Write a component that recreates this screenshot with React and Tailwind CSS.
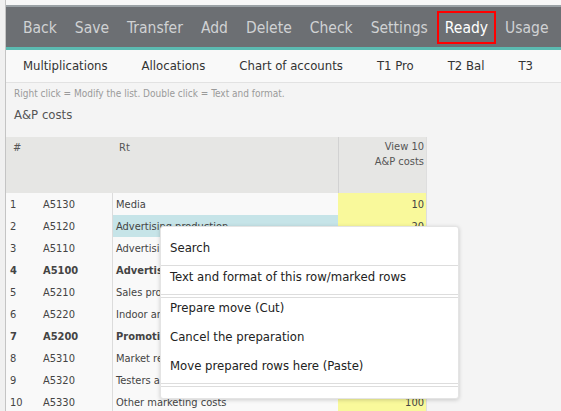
import React from "react";

const font = { fontFamily: '"DejaVu Sans Condensed", Tahoma, "DejaVu Sans", sans-serif' };

const toolbar = ["Back", "Save", "Transfer", "Add", "Delete", "Check", "Settings"];
const tabs = ["Multiplications", "Allocations", "Chart of accounts", "T1 Pro", "T2 Bal", "T3"];

const rows = [
  { n: "1", code: "A5130", name: "Media", v: "10" },
  { n: "2", code: "A5120", name: "Advertising production", v: "20", hl: true },
  { n: "3", code: "A5110", name: "Advertising agency fees", v: "30" },
  { n: "4", code: "A5100", name: "Advertising", v: "60", bold: true },
  { n: "5", code: "A5210", name: "Sales promotion", v: "40" },
  { n: "6", code: "A5220", name: "Indoor and outdoor displays", v: "50" },
  { n: "7", code: "A5200", name: "Promotion", v: "90", bold: true },
  { n: "8", code: "A5310", name: "Market research", v: "70" },
  { n: "9", code: "A5320", name: "Testers and samples", v: "80" },
  { n: "10", code: "A5330", name: "Other marketing costs", v: "100" },
];

export default function App() {
  return (
    <div className="w-[561px] h-[411px] overflow-hidden bg-[#f4f4f4] flex relative" style={font}>
      <div className="w-[5px] shrink-0 bg-[#f0f0f0] border-r border-[#c4c4c4] box-content" />
      <div className="flex-1 flex flex-col min-w-0">
        <div className="h-[5px] bg-[#f7f7f7] shrink-0" />
        <div className="h-[45px] shrink-0 bg-[#6c6f73] border-t-2 border-[#9ba2a6] border-b-[3px] border-b-[#5bbab1] flex items-center pl-[8px] pt-[1px]">
          {toolbar.map((t) => (
            <div key={t} className="px-[9px] text-[15.5px] text-[#d0d2d4] leading-[20px] pt-[1px]">{t}</div>
          ))}
          <div className="h-[33px] border-2 border-[#ff0000] px-[6px] flex items-center text-[15.5px] text-white leading-[20px] pt-[1px]">
            Ready
          </div>
          <div className="px-[9px] text-[15.5px] text-[#d0d2d4] leading-[20px] pt-[1px]">Usage</div>
        </div>
        <div className="h-[33px] shrink-0 bg-[#f9f9f9] border-b border-[#e2e2e2] flex items-center">
          {tabs.map((t) => (
            <div key={t} className="px-[17px] text-[13px] text-[#333] leading-[16px]">{t}</div>
          ))}
        </div>
        <div className="pl-[8px] pt-[4px] text-[10px] leading-[13px] text-[#9a9a9a]">
          Right click = Modify the list. Double click = Text and format.
        </div>
        <div className="pl-[8px] pt-[7px] text-[13px] leading-[16px] text-[#555]">A&amp;P costs</div>
        <div className="mt-[14px] w-[421px] border-r border-[#dedede]">
          <div className="h-[56px] bg-[#e6e6e4] flex text-[11px] leading-[15px] text-[#555]">
            <div className="w-[106px] pl-[7px] pt-[3px]">#</div>
            <div className="w-[226px] pl-[7px] pt-[3px]">Rt</div>
            <div className="flex-1 border-l border-[#d2d2d2] pr-[2px] pt-[2px] text-right">
              <div>View 10</div>
              <div>A&amp;P costs</div>
            </div>
          </div>
          {rows.map((r) => (
            <div key={r.n} className={`h-[22px] flex text-[11px] leading-[20px] text-[#444] ${r.bold ? "font-bold" : ""}`}>
              <div className="w-[36px] pl-[4px] pt-[2px] bg-[#f9f9f9]">{r.n}</div>
              <div className="w-[70px] pl-[1px] pt-[2px] bg-[#f9f9f9]">{r.code}</div>
              <div className={`w-[226px] border-l border-[#dcdcdc] pl-[3px] pt-[2px] whitespace-nowrap overflow-hidden ${r.hl ? "bg-[#c6e4e8]" : "bg-[#f9f9f9]"}`}>
                {r.name}
              </div>
              <div className="flex-1 bg-[#f9f99b] text-right pr-[2px] pt-[2px] font-normal">{r.v}</div>
            </div>
          ))}
        </div>
      </div>

      <div className="absolute left-[160px] top-[226px] w-[299px] bg-white border border-[#e4e4e4] rounded-[3px] shadow-[0_1px_4px_rgba(0,0,0,0.18)] text-[13px] leading-[16px] text-[#222]">
        <div className="pl-[9px] pt-[13px] pb-[9px] border-b border-[#dddddd]">Search</div>
        <div className="pl-[9px] pt-[3px] pb-[9px] border-b border-[#dddddd]">Text and format of this row/marked rows</div>
        <div className="mt-[2px] border-t border-[#dddddd]" />
        <div className="pl-[9px] pt-[2px] pb-[11px]">Prepare move (Cut)</div>
        <div className="pl-[9px] pt-[2px] pb-[11px]">Cancel the preparation</div>
        <div className="pl-[9px] pt-[2px] pb-[9px] border-b border-[#dddddd]">Move prepared rows here (Paste)</div>
        <div className="mt-[2px] border-t border-[#dddddd] h-[12px]" />
      </div>
    </div>
  );
}
